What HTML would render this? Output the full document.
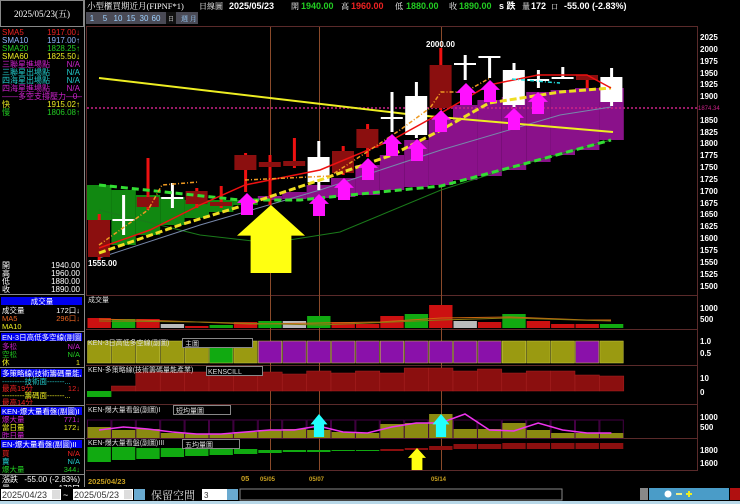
<!DOCTYPE html>
<html><head><meta charset="utf-8"><style>
html,body{margin:0;padding:0;background:#000;width:740px;height:504px;overflow:hidden}
svg{display:block}
text{font-family:"Liberation Sans","Noto Sans CJK TC",sans-serif}
.s{font-family:"Liberation Serif","Noto Serif CJK SC",serif}
</style></head><body>
<svg id="g" width="740" height="504" viewBox="0 0 740 504" xmlns="http://www.w3.org/2000/svg">
<rect width="740" height="504" fill="#000"/>
<rect x="0.5" y="0.5" width="83" height="26" fill="none" stroke="#888"/>
<text x="42" y="17" fill="#fff" font-size="9" text-anchor="middle" class="s">2025/05/23(五)</text>
<line x1="84.5" y1="0" x2="84.5" y2="487" stroke="#888"/>
<text x="87" y="9" fill="#fff" font-size="8.5" class="s">小型櫃買期近月(FIPNF*1)</text>
<text x="199" y="9" fill="#fff" font-size="8" class="s">日線圖</text>
<text x="229" y="9" fill="#fff" font-size="9" font-weight="bold">2025/05/23</text>
<text x="291" y="9" fill="#fff" font-size="8" class="s">開</text>
<text x="301" y="9" fill="#22cc22" font-size="9" font-weight="bold">1940.00</text>
<text x="341" y="9" fill="#fff" font-size="8" class="s">高</text>
<text x="351" y="9" fill="#ee2222" font-size="9" font-weight="bold">1960.00</text>
<text x="395" y="9" fill="#fff" font-size="8" class="s">低</text>
<text x="406" y="9" fill="#22cc22" font-size="9" font-weight="bold">1880.00</text>
<text x="449" y="9" fill="#fff" font-size="8" class="s">收</text>
<text x="459" y="9" fill="#22cc22" font-size="9" font-weight="bold">1890.00</text>
<text x="499" y="9" fill="#fff" font-size="9" font-weight="bold">s 跌</text>
<text x="522" y="9" fill="#fff" font-size="8" class="s">量</text>
<text x="531" y="9" fill="#fff" font-size="9" font-weight="bold">172</text>
<text x="551" y="9" fill="#fff" font-size="7" class="s">口</text>
<text x="564" y="9" fill="#fff" font-size="9" font-weight="bold">-55.00 (-2.83%)</text>
<rect x="86" y="12" width="82" height="12" fill="#4a4a55"/>
<g font-size="8" fill="#9cd0ff" text-anchor="middle">
<text x="92" y="21">1</text><text x="105" y="21">5</text><text x="118" y="21">10</text><text x="131" y="21">15</text><text x="144" y="21">30</text><text x="156" y="21">60</text></g>
<rect x="166" y="12" width="10" height="12" fill="#111"/>
<text x="171" y="21" fill="#bbb" font-size="6" text-anchor="middle">日</text>
<rect x="176" y="12" width="22" height="12" fill="#4a4a55"/>
<text x="181" y="21" fill="#9cd0ff" font-size="7" class="s">週 月</text>

<g font-size="8" class="s">
<text x="2" y="35" fill="#ee2222">SMA5</text><text x="80" y="35" fill="#ee2222" text-anchor="end">1917.00↓</text>
<text x="2" y="43" fill="#8fb8ff">SMA10</text><text x="80" y="43" fill="#8fb8ff" text-anchor="end">1917.00↑</text>
<text x="2" y="51" fill="#22cc22">SMA20</text><text x="80" y="51" fill="#22cc22" text-anchor="end">1828.25↑</text>
<text x="2" y="59" fill="#eeee22">SMA60</text><text x="80" y="59" fill="#eeee22" text-anchor="end">1825.50↓</text>
<text x="2" y="67" fill="#cc22cc">三聯星進場點</text><text x="80" y="67" fill="#cc22cc" text-anchor="end">N/A</text>
<text x="2" y="75" fill="#22cccc">三聯星出場點</text><text x="80" y="75" fill="#22cccc" text-anchor="end">N/A</text>
<text x="2" y="83" fill="#22cccc">四海星出場點</text><text x="80" y="83" fill="#22cccc" text-anchor="end">N/A</text>
<text x="2" y="91" fill="#cc22cc">四海星進場點</text><text x="80" y="91" fill="#cc22cc" text-anchor="end">N/A</text>
<text x="2" y="99" fill="#cc22cc">——多空支撐壓力——</text><text x="80" y="99" fill="#cc22cc" text-anchor="end">0-</text>
<text x="2" y="107" fill="#eeee22">快</text><text x="80" y="107" fill="#eeee22" text-anchor="end">1915.02↑</text>
<text x="2" y="115" fill="#22cc22">慢</text><text x="80" y="115" fill="#22cc22" text-anchor="end">1806.08↑</text>
</g>
<g font-size="8" class="s" fill="#fff">
<text x="2" y="268">開</text><text x="80" y="268" text-anchor="end">1940.00</text>
<text x="2" y="276">高</text><text x="80" y="276" text-anchor="end">1960.00</text>
<text x="2" y="284">低</text><text x="80" y="284" text-anchor="end">1880.00</text>
<text x="2" y="292">收</text><text x="80" y="292" text-anchor="end">1890.00</text>
</g>
<line x1="0" y1="294.5" x2="84" y2="294.5" stroke="#888"/>
<rect x="1" y="297" width="81" height="8" fill="#0000ee"/>
<g font-size="7.5" class="s">
<text x="42" y="304" fill="#fff" text-anchor="middle">成交量</text>
<text x="2" y="313" fill="#fff">成交量</text><text x="80" y="313" fill="#fff" text-anchor="end">172口↓</text>
<text x="2" y="321" fill="#ee6622">MA5</text><text x="80" y="321" fill="#ee6622" text-anchor="end">296口↓</text>
<text x="2" y="329" fill="#eeee22">MA10</text>
</g>
<line x1="0" y1="331.5" x2="84" y2="331.5" stroke="#888"/>
<rect x="1" y="333" width="81" height="8" fill="#0000ee"/>
<g font-size="7.5" class="s">
<text x="2" y="340" fill="#fff">EN-3日高低多空線(副圖</text>
<text x="2" y="349" fill="#cc22cc">多松</text><text x="80" y="349" fill="#cc22cc" text-anchor="end">N/A</text>
<text x="2" y="357" fill="#22cc22">空松</text><text x="80" y="357" fill="#22cc22" text-anchor="end">N/A</text>
<text x="2" y="365" fill="#eeee22">休</text><text x="80" y="365" fill="#eeee22" text-anchor="end">1</text>
</g>
<line x1="0" y1="367.5" x2="84" y2="367.5" stroke="#888"/>
<rect x="1" y="369" width="81" height="8" fill="#0000ee"/>
<g font-size="7.5" class="s">
<text x="2" y="376" fill="#fff">多策略線(技術籌碼量能,</text>
<text x="2" y="384" fill="#22cccc">---------技術面-------...</text>
<text x="2" y="391" fill="#ee2222">最高19分</text><text x="80" y="391" fill="#ee2222" text-anchor="end">12↓</text>
<text x="2" y="398" fill="#eeee22">---------籌碼面-------...</text>
<text x="2" y="405" fill="#ee2222">最高14分</text>
</g>
<line x1="0" y1="405.5" x2="84" y2="405.5" stroke="#888"/>
<rect x="1" y="407" width="81" height="8" fill="#0000ee"/>
<g font-size="7.5" class="s">
<text x="2" y="414" fill="#fff">KEN-爆大量看盤(副圖)I</text>
<text x="2" y="422" fill="#cc22cc">爆大量</text><text x="80" y="422" fill="#cc22cc" text-anchor="end">771↓</text>
<text x="2" y="430" fill="#eeee22">當日量</text><text x="80" y="430" fill="#eeee22" text-anchor="end">172↓</text>
<text x="2" y="438" fill="#cc22cc">昨日量</text>
</g>
<line x1="0" y1="438.5" x2="84" y2="438.5" stroke="#888"/>
<rect x="1" y="440" width="81" height="8" fill="#0000ee"/>
<g font-size="7.5" class="s">
<text x="2" y="447" fill="#fff">EN-爆大量看盤(副圖)II</text>
<text x="2" y="456" fill="#ee2222">買</text><text x="80" y="456" fill="#ee2222" text-anchor="end">N/A</text>
<text x="2" y="464" fill="#22cccc">賣</text><text x="80" y="464" fill="#22cccc" text-anchor="end">N/A</text>
<text x="2" y="472" fill="#22cc22">爆大量</text><text x="80" y="472" fill="#22cc22" text-anchor="end">344↓</text>
</g>
<line x1="0" y1="474.5" x2="84" y2="474.5" stroke="#888"/>
<g font-size="8" class="s" fill="#fff">
<text x="2" y="482">漲跌</text><text x="80" y="482" text-anchor="end">-55.00 (-2.83%)</text>
<text x="2" y="491">量</text><text x="80" y="491" text-anchor="end">172口</text>
</g>

<g stroke="#5a2a2a" fill="none">
<rect x="86.5" y="26.5" width="611" height="269"/>
<line x1="86" y1="329.5" x2="698" y2="329.5"/>
<line x1="86" y1="365.5" x2="698" y2="365.5"/>
<line x1="86" y1="404.5" x2="698" y2="404.5"/>
<line x1="86" y1="438.5" x2="698" y2="438.5"/>
<line x1="86" y1="470.5" x2="698" y2="470.5"/>
<line x1="697.5" y1="296" x2="697.5" y2="470"/>
</g>
<g stroke="#8a4a2a"><line x1="270.5" y1="27" x2="270.5" y2="470"/><line x1="319.5" y1="27" x2="319.5" y2="470"/><line x1="441.5" y1="27" x2="441.5" y2="470"/></g>
<g id="dyn"></g>

<g font-size="8" font-weight="bold" fill="#fff">
<text x="700" y="40">2025</text><text x="700" y="52">2000</text><text x="700" y="64">1975</text><text x="700" y="76">1950</text><text x="700" y="87">1925</text><text x="700" y="99">1900</text><text x="700" y="123">1850</text><text x="700" y="135">1825</text><text x="700" y="146">1800</text><text x="700" y="158">1775</text><text x="700" y="170">1750</text><text x="700" y="182">1725</text><text x="700" y="194">1700</text><text x="700" y="206">1675</text><text x="700" y="217">1650</text><text x="700" y="229">1625</text><text x="700" y="241">1600</text><text x="700" y="253">1575</text><text x="700" y="265">1550</text><text x="700" y="277">1525</text><text x="700" y="289">1500</text>
<text x="700" y="311">1000</text><text x="700" y="322">500</text>
<text x="700" y="344">1.0</text><text x="700" y="356">0.5</text>
<text x="700" y="381">10</text><text x="700" y="395">0</text>
<text x="700" y="420">1000</text><text x="700" y="430">500</text>
<text x="700" y="453">1800</text><text x="700" y="466">1600</text>
</g>
<text x="698" y="110" fill="#cc2288" font-size="6">1874.34</text>
<text x="426" y="47" fill="#fff" font-size="8" font-weight="bold">2000.00</text>
<text x="88" y="266" fill="#fff" font-size="8" font-weight="bold">1555.00</text>
<g font-size="7" class="s" fill="#ddd">
<text x="88" y="302">成交量</text>
<text x="88" y="345">KEN-3日高低多空線(副圖)</text>
<text x="88" y="372">KEN-多策略線(技術籌碼量能產業)</text>
<text x="88" y="412">KEN-爆大量看盤(副圖)I</text>
<text x="88" y="445">KEN-爆大量看盤(副圖)III</text>
</g>
<g font-size="7" class="s" fill="#ddd" stroke="#888">
<rect x="182.5" y="338.5" width="70" height="9" fill="#000"/><text x="185" y="346" stroke="none">主圖</text>
<rect x="206.5" y="366.5" width="56" height="9" fill="#000"/><text x="208" y="374" stroke="none">KENSCILL</text>
<rect x="173.5" y="405.5" width="57" height="9" fill="#000"/><text x="176" y="413" stroke="none">短均量圖</text>
<rect x="182.5" y="439.5" width="57" height="9" fill="#000"/><text x="185" y="447" stroke="none">五均量圖</text>
</g>
<g font-size="7.5" font-weight="bold" fill="#c8a020">
<text x="88" y="484">2025/04/23</text><text x="241" y="481">05</text>
<text x="260" y="481" font-size="6">05/05</text><text x="309" y="481" font-size="6">05/07</text><text x="431" y="481" font-size="6">05/14</text>
</g>
<rect x="0" y="487" width="740" height="17" fill="#000"/>
<rect x="0" y="501" width="740" height="3" fill="#b8d8e8"/>
<rect x="1" y="489" width="60" height="11" fill="#fff"/><text x="2" y="498" font-size="9" fill="#333">2025/04/23</text><rect x="52" y="490" width="8" height="9" fill="#ddd"/>
<text x="63" y="498" font-size="9" fill="#fff">~</text>
<rect x="73" y="489" width="60" height="11" fill="#fff"/><text x="74" y="498" font-size="9" fill="#333">2025/05/23</text><rect x="124" y="490" width="8" height="9" fill="#ddd"/>
<rect x="134" y="489" width="11" height="11" fill="#6aaad0"/>
<text x="151" y="499" font-size="11" fill="#ddd" class="s">保留空間</text>
<rect x="202" y="489" width="25" height="11" fill="#fff"/><text x="204" y="498" font-size="8" fill="#333">3</text>
<rect x="227" y="489" width="11" height="11" fill="#6aaad0"/>
<rect x="240" y="489" width="322" height="11" fill="#000" stroke="#888"/>
<rect x="640" y="488" width="8" height="12" fill="#888"/>
<rect x="649" y="488" width="80" height="12" fill="#4a9cc8"/>
<rect x="730" y="488" width="10" height="12" fill="#b01010"/>
<circle cx="668" cy="494" r="3.5" fill="#fff"/><rect x="676" y="493" width="6" height="2" fill="#ee8"/><rect x="686" y="493" width="6" height="2" fill="#ee2"/><rect x="688" y="491" width="2" height="6" fill="#ee2"/>
</svg>
<script>
var NS="http://www.w3.org/2000/svg",D=document.getElementById("dyn");
function el(t,a){var e=document.createElementNS(NS,t);for(var k in a)e.setAttribute(k,a[k]);D.appendChild(e);return e}
function X(i){return 87+i*24.4}
var gf=[[185,220],[190,245],[195,235],[197,225],[200,218],[200,212],[200,205]];
gf.forEach(function(v,i){el("rect",{x:X(i),y:v[0],width:24.4,height:v[1]-v[0],fill:"#118811"})});
var pf=[[7,196,200],[8,192,199],[9,185,198],[10,178,197],[11,165,195],[12,155,190],[13,140,187],[14,120,185],[15,105,180],[16,100,176],[17,97,170],[18,92,162],[19,90,155],[20,88,150],[21,88,140]];
pf.forEach(function(v){el("rect",{x:X(v[0]),y:v[1],width:24.4,height:v[2]-v[1],fill:"#8a118a"})});
el("line",{x1:87,y1:108,x2:697,y2:108,stroke:"#cc2288","stroke-width":1.5,"stroke-dasharray":"2,2"});
function pl(p,s,w,d){el("polyline",{points:p,fill:"none",stroke:s,"stroke-width":w,"stroke-dasharray":d||""})}
pl("99,210 200,235 270,243 340,232 441,190 520,165 611,140","#1a7a1a",1);
pl("99,258 200,225 320,190 441,150 560,115 611,107","#7788aa",1);
pl("99,78 415,115 613,132","#eeee22",2);
var W="#fff",R="#8b0f0f";
var c=[[214,220,257,260,R],[195,219,221,235,W],[158,197,207,210,R],[183,197,199,208,W],[188,191,204,208,R],[186,202,206,208,R],[153,155,170,192,R],[155,162,167,205,R],[138,161,166,168,R],[141,157,182,190,W],[146,151,173,175,R],[124,129,148,157,R],[92,117,119,132,W],[82,96,135,138,W],[48,65,108,110,R],[55,63,65,80,W],[56,56,58,78,W],[63,70,105,107,W],[70,79,81,88,W],[67,77,79,79,W],[75,75,80,88,R],[68,77,102,106,W]];
c.forEach(function(v,i){var cx=X(i)+12.2;el("rect",{x:cx-1.5,y:v[0],width:3,height:v[3]-v[0],fill:v[4]==W?W:"#ee1111"});el("rect",{x:X(i)+1,y:v[1],width:22,height:Math.max(2,v[2]-v[1]),fill:v[4]})});
pl("99,185 240,200 300,200 400,190 441,186 520,165 611,140","#33dd33",3,"7,4");
pl("99,253 180,225 245,205 320,180 392,155 441,130 489,103 560,92 611,88","#eedd22",3,"7,3");
pl("99,248 150,230 200,205 245,185 320,170 392,140 441,113 489,85 538,75 587,75 611,88","#ee1111",1.5);
pl("99,245 148,210 162,185 198,182","#ee9922",1.5,"4,2,1,2");
pl("245,180 330,176 370,150 400,130 430,108 441,92 465,92 490,78","#ee9922",1.5,"4,2,1,2");
pl("512,79 560,83","#22dddd",1.5,"4,2,1,2");
function up(x,y,w,h,f){var hw=w/2,sh=w*0.3,hh=h*0.45;el("polygon",{points:[x,y,x+hw,y+hh,x+sh,y+hh,x+sh,y+h,x-sh,y+h,x-sh,y+hh,x-hw,y+hh].join(" "),fill:f})}
up(271,205,68,68,"#ffff11");
[[247,193],[319,194],[344,178],[368,158],[392,134],[417,139],[441,110],[466,83],[490,80],[514,108],[538,92]].forEach(function(p){up(p[0],p[1],20,22,"#ff11ff")});
var vb=[[318,"#cc1111"],[319,"#11aa11"],[319,"#cc1111"],[324,"#bbb"],[326,"#cc1111"],[325,"#11aa11"],[322,"#cc1111"],[321,"#11aa11"],[321,"#bbb"],[316,"#11aa11"],[322,"#cc1111"],[324,"#cc1111"],[316,"#cc1111"],[314,"#11aa11"],[305,"#cc1111"],[321,"#bbb"],[322,"#cc1111"],[314,"#11aa11"],[321,"#cc1111"],[324,"#cc1111"],[324,"#cc1111"],[324,"#11aa11"]];
vb.forEach(function(v,i){el("rect",{x:X(i)+0.5,y:v[0],width:23.4,height:328-v[0],fill:v[1]})});
pl("99,319 170,321 250,324 320,323 380,322 441,318 510,317 587,320 611,320","#cc6611",1);
pl("99,321 200,322 320,325 441,320 510,318 611,321","#8a7a11",1);
var O="#9a9a11",P="#8a11aa",G="#11aa11";
var p2=[O,O,O,O,O,G,O,P,P,P,P,P,P,P,P,P,P,O,O,O,P,O];
p2.forEach(function(f,i){el("rect",{x:X(i)+0.5,y:341,width:23.4,height:22,fill:f,stroke:"#cccc44","stroke-width":0.5})});
el("rect",{x:X(0),y:391,width:24.4,height:6,fill:"#11aa11"});
var p3=[0,386,372,372,372,371,373,372,374,371,373,371,373,368,368,371,369,373,371,371,375,376];
p3.forEach(function(t,i){if(i>0)el("rect",{x:X(i),y:t,width:24.4,height:391-t,fill:"#8b0f0f",stroke:"#aa2222","stroke-width":0.5})});
var p4=[427,430,429,433,434,434,432,430,429,430,432,433,424,423,414,429,429,423,430,433,433,433];
p4.forEach(function(t,i){el("rect",{x:X(i)+0.5,y:420,width:23.4,height:18,fill:"none",stroke:"#440044"});el("rect",{x:X(i)+0.5,y:t,width:23.4,height:438-t,fill:"#8a8a11"})});
var m=[430,427,429,432,434,434,432,430,430,426,432,433,427,423,423,414,430,431,423,430,433,433];
pl(m.map(function(y,i){return (X(i)+12)+","+y}).join(" "),"#ee33ee",1.5);
up(319,414,17,23,"#22ffff");up(441,414,17,23,"#22ffff");
var p5=[[447,462],[447,460],[448,459],[448,457],[449,456],[449,455],[449,454],[450,453],[450,452],[450,452],[450,451],[450,451]];
p5.forEach(function(v,i){el("rect",{x:X(i)+0.5,y:v[0],width:23.4,height:v[1]-v[0],fill:"#11aa11"})});
var r5=[[12,449,451],[13,448,450],[14,446,450],[15,444,449],[16,444,449],[17,443,449],[18,443,449],[19,443,449],[20,443,449],[21,443,449]];
r5.forEach(function(v){el("rect",{x:X(v[0])+0.5,y:v[1],width:23.4,height:v[2]-v[1],fill:"#8b0f0f"})});
up(417,448,18,22,"#ffff11");
</script>
</body></html>
